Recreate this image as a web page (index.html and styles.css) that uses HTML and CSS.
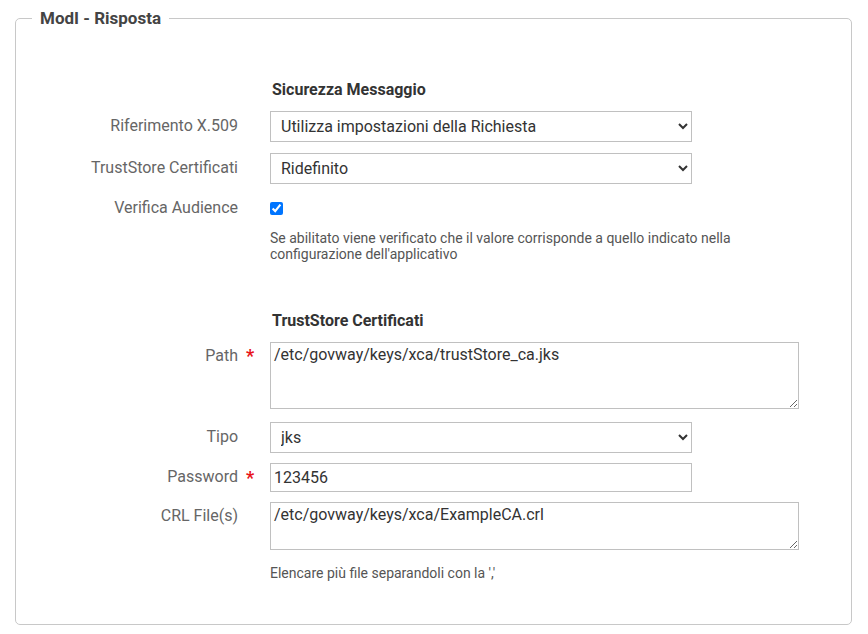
FILE: index.html
```html
<!DOCTYPE html>
<html lang="it">
<head>
<meta charset="utf-8">
<title>ModI - Risposta</title>
<link rel="stylesheet" href="styles.css">
</head>
<body>
<div class="page">
  <fieldset class="panel">
    <legend class="panel-legend">ModI - Risposta</legend>

    <div class="section-title">Sicurezza Messaggio</div>

    <div class="row row-select">
      <label class="lbl">Riferimento X.509</label>
      <span class="req"></span>
      <div class="field">
        <select class="ctl sel">
          <option>Utilizza impostazioni della Richiesta</option>
        </select>
      </div>
    </div>

    <div class="row row-select">
      <label class="lbl">TrustStore Certificati</label>
      <span class="req"></span>
      <div class="field">
        <select class="ctl sel">
          <option>Ridefinito</option>
        </select>
      </div>
    </div>

    <div class="row row-check">
      <label class="lbl">Verifica Audience</label>
      <span class="req"></span>
      <div class="field">
        <input type="checkbox" class="chk" checked>
        <p class="help help-check">Se abilitato viene verificato che il valore corrisponde a quello indicato nella configurazione dell'applicativo</p>
      </div>
    </div>

    <div class="section-title section-second">TrustStore Certificati</div>

    <div class="row row-area">
      <label class="lbl">Path</label>
      <span class="req">*</span>
      <div class="field">
        <textarea class="ctl area area-tall">/etc/govway/keys/xca/trustStore_ca.jks</textarea>
      </div>
    </div>

    <div class="row row-select">
      <label class="lbl">Tipo</label>
      <span class="req"></span>
      <div class="field">
        <select class="ctl sel">
          <option>jks</option>
        </select>
      </div>
    </div>

    <div class="row row-input">
      <label class="lbl">Password</label>
      <span class="req">*</span>
      <div class="field">
        <input type="text" class="ctl txt" value="123456">
      </div>
    </div>

    <div class="row row-area">
      <label class="lbl">CRL File(s)</label>
      <span class="req"></span>
      <div class="field">
        <textarea class="ctl area area-short">/etc/govway/keys/xca/ExampleCA.crl</textarea>
        <p class="help help-crl">Elencare più file separandoli con la ','</p>
      </div>
    </div>
  </fieldset>
</div>
</body>
</html>
```
FILE: styles.css
```css
* { box-sizing: border-box; }

html, body {
  margin: 0;
  padding: 0;
  background: #ffffff;
}

body {
  font-family: Roboto, "Liberation Sans", Arial, sans-serif;
  color: #333333;
}

.page {
  padding: 0 16px 0 15px;
}

.panel {
  margin: 8px 0 0 0;
  padding: 0 16px 0 16px;
  border: 1px solid #c8c8c8;
  border-radius: 5px;
  height: 617px;
  min-width: 0;
}

.panel-legend {
  padding: 0 8px;
  font-size: 17px;
  font-weight: 700;
  color: #444444;
  line-height: 20px;
}

.section-title {
  margin: 53px 0 0 240px;
  font-size: 16px;
  font-weight: 700;
  color: #333333;
  line-height: 18px;
}

.section-second {
  margin-top: 50px;
}

.row {
  display: grid;
  grid-template-columns: 206px 32px 1fr;
  align-items: start;
}

.lbl {
  text-align: right;
  font-size: 16px;
  color: #666666;
  line-height: 18px;
}

.req {
  color: #e8141b;
  font-size: 18px;
  font-weight: 700;
  padding-left: 8px;
  line-height: 18px;
}

.field {
  display: flex;
  flex-direction: column;
  align-items: flex-start;
}

.ctl {
  font-family: Roboto, "Liberation Sans", Arial, sans-serif;
  font-size: 16px;
  color: #333333;
  border: 1px solid #c0c0c0;
  border-radius: 0;
  background: #ffffff;
  margin: 0;
}

.sel {
  width: 422px;
  height: 31px;
  padding: 0 6px;
}

.txt {
  width: 422px;
  height: 29px;
  padding: 2px 3px;
}

.area {
  width: 529px;
  padding: 3px 3px;
  line-height: 18px;
  resize: both;
}

.area-tall { height: 67px; }
.area-short { height: 48px; }

.row-select .lbl { padding-top: 6px; }
.row-input .lbl { padding-top: 5px; }
.row-area .lbl,
.row-area .req { padding-top: 5px; }
.row-input .req { padding-top: 6px; }

.section-title + .row { margin-top: 12px; }

.row-select + .row-select { margin-top: 11px; }
.row-select + .row-check { margin-top: 10px; }
.row-area + .row-select { margin-top: 13px; }
.row-select + .row-input { margin-top: 10px; }
.row-input + .row-area { margin-top: 10px; }

.row-check .lbl { padding-top: 5px; }

.chk {
  width: 13px;
  height: 13px;
  margin: 8px 0 0 0;
  accent-color: #0075ff;
}

.help {
  margin: 0;
  font-size: 14px;
  line-height: 16px;
  color: #555555;
}

.help-check {
  margin-top: 15px;
  width: 500px;
}

.help-crl {
  margin-top: 15px;
}
```
